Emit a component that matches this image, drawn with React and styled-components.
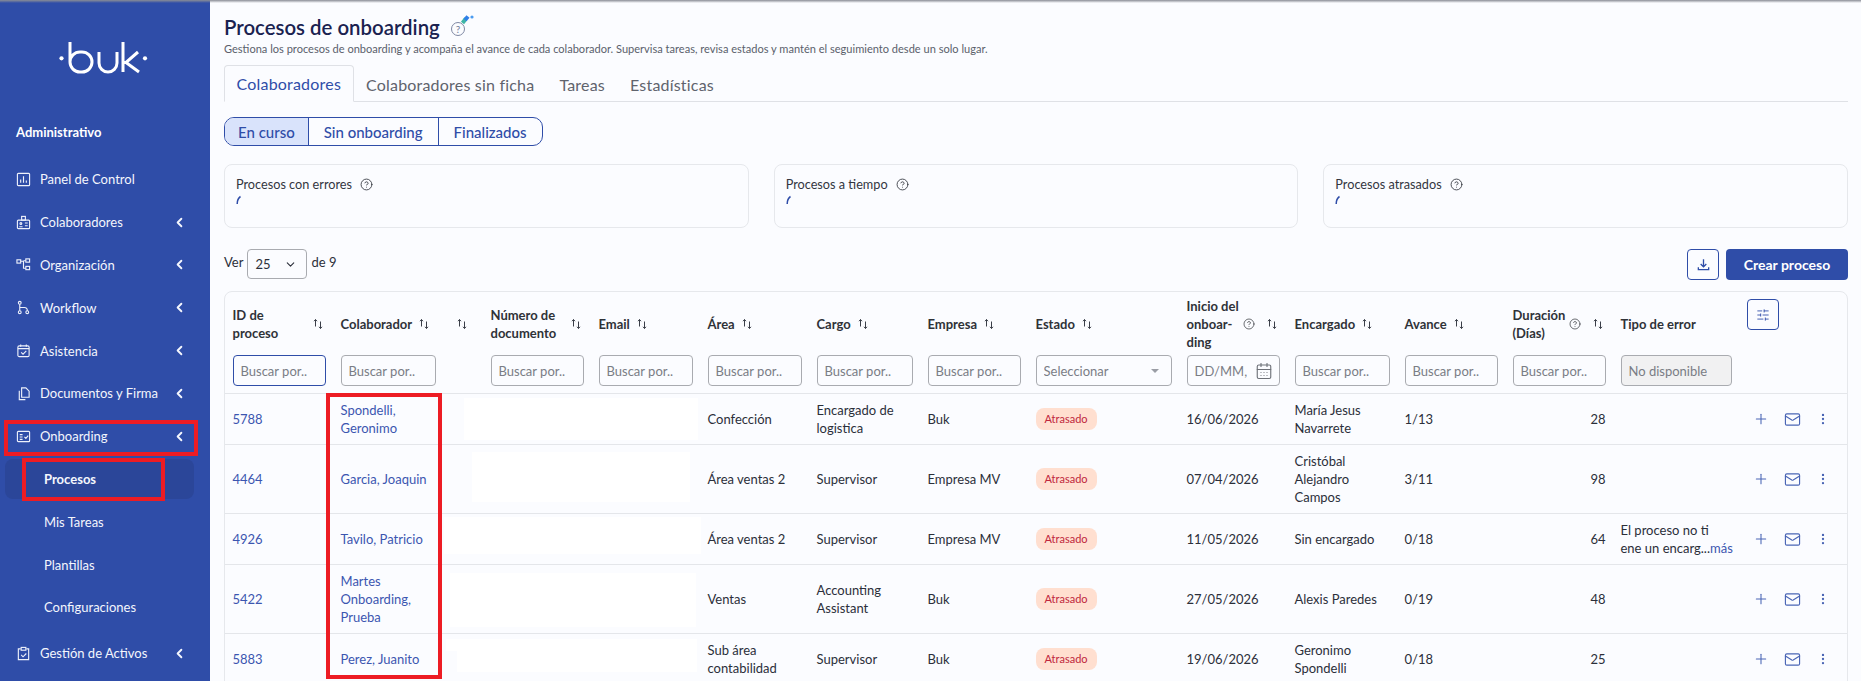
import React from "react";
import styled, {createGlobalStyle} from "styled-components";
import {CalendarDays, ChevronDown, ChevronLeft, CircleHelp, EllipsisVertical, Mail, Plus, SlidersHorizontal} from "lucide-react";

const primary = "#2f4da8";

const navIcons = {
    panel: <><rect x="1.5" y="1.5" width="13" height="13" rx="1"/><path d="M5 11.5V8M8 11.5V4.5M11 11.5V9"/></>,
    people: <><rect x="1.5" y="5.5" width="13" height="9" rx="1"/><rect x="6" y="1.5" width="4" height="4"/><circle cx="5.2" cy="9" r="1"/><path d="M3.5 12.5h3.5M9.5 8.5h3M9.5 11.5h3"/></>,
    org: <><rect x="1" y="3" width="4" height="3.5"/><rect x="10.5" y="2" width="4" height="3.5"/><rect x="10.5" y="10" width="4" height="3.5"/><path d="M5 4.5h3V12h2.5M8 4h2.5"/></>,
    flow: <><circle cx="4" cy="3" r="1.5"/><circle cx="4" cy="13" r="1.5"/><circle cx="12" cy="13" r="1.5"/><path d="M4 4.5v7M4 8h5a3 3 0 0 1 3 3.5"/></>,
    calendar: <><rect x="2" y="3" width="12" height="11.5" rx="1.5"/><path d="M2 6h12M5 1.5V4M11 1.5V4M5.5 10l2 2 3.5-3.5"/></>,
    docs: <><path d="M6 2h4.5L14 5.5V12H6z"/><path d="M3.5 5v9.5H10"/></>,
    onboarding: <><rect x="1.5" y="2.5" width="13" height="11" rx="1"/><path d="M4 6h3M4 8.5h3M4 11h3M9 8.5l1.5 1.5 2.5-3"/></>,
    assets: <><path d="M5 3H2.5v11.5h11V3H11"/><rect x="5.5" y="1.5" width="5" height="3"/><path d="M5.5 9.5l2 2 3.5-3.5"/></>
};

const navItems = [
    {icon: "panel", label: "Panel de Control"},
    {icon: "people", label: "Colaboradores", chevron: true},
    {icon: "org", label: "Organización", chevron: true},
    {icon: "flow", label: "Workflow", chevron: true},
    {icon: "calendar", label: "Asistencia", chevron: true},
    {icon: "docs", label: "Documentos y Firma", chevron: true},
    {icon: "onboarding", label: "Onboarding", chevron: true}
];

const subItems = ["Procesos", "Mis Tareas", "Plantillas", "Configuraciones"];

const columns = [
    {title: <>ID de<br/>proceso</>, width: 108, spread: true},
    {title: "Colaborador", width: 150, extraSort: true},
    {title: <>Número de<br/>documento</>, width: 108, spread: true},
    {title: "Email", width: 109},
    {title: "Área", width: 109},
    {title: "Cargo", width: 111},
    {title: "Empresa", width: 108},
    {title: "Estado", width: 151, filter: "select"},
    {title: <>Inicio del<br/>onboar-<br/>ding</>, width: 108, help: true, spread: true, filter: "date"},
    {title: "Encargado", width: 110},
    {title: "Avance", width: 108},
    {title: <>Duración<br/>(Días)</>, width: 108, help: true, spread: true},
    {title: "Tipo de error", width: 126, noSort: true, filter: "disabled"}
];

const rows = [
    {id: "5788", name: "Spondelli, Geronimo", area: "Confección", cargo: "Encargado de logistica", empresa: "Buk", inicio: "16/06/2026", encargado: "María Jesus Navarrete", avance: "1/13", dias: 28},
    {id: "4464", name: "Garcia, Joaquin", area: "Área ventas 2", cargo: "Supervisor", empresa: "Empresa MV", inicio: "07/04/2026", encargado: "Cristóbal Alejandro Campos", avance: "3/11", dias: 98},
    {id: "4926", name: "Tavilo, Patricio", area: "Área ventas 2", cargo: "Supervisor", empresa: "Empresa MV", inicio: "11/05/2026", encargado: "Sin encargado", avance: "0/18", dias: 64, error: true},
    {id: "5422", name: "Martes Onboarding, Prueba", area: "Ventas", cargo: "Accounting Assistant", empresa: "Buk", inicio: "27/05/2026", encargado: "Alexis Paredes", avance: "0/19", dias: 48},
    {id: "5883", name: "Perez, Juanito", area: "Sub área contabilidad", cargo: "Supervisor", empresa: "Buk", inicio: "19/06/2026", encargado: "Geronimo Spondelli", avance: "0/18", dias: 25}
];

const whiteouts = [
    {x: 464, y: 398, w: 234, h: 42},
    {x: 472, y: 452, w: 218, h: 50},
    {x: 444, y: 517, w: 257, h: 37},
    {x: 450, y: 573, w: 246, h: 54},
    {x: 446, y: 639, w: 251, h: 12},
    {x: 457, y: 651, w: 240, h: 21}
];

const redBoxes = [
    {x: 4, y: 420, w: 194, h: 36},
    {x: 22, y: 458, w: 143, h: 43},
    {x: 326, y: 393, w: 116, h: 286}
];

const NavIcon = ({name}) => <NavSvg viewBox="0 0 16 16">{navIcons[name]}</NavSvg>;

const SortIcon = () => <SortSvg viewBox="0 0 12 12">
    <path d="M3.5 8.5V1.5M2 3.2 3.5 1.5 5 3.2M8.5 3.5v7M7 8.8 8.5 10.5 10 8.8"/>
</SortSvg>;

const Spinner = () => <SpinnerSvg viewBox="0 0 6 10"><path d="M1.2 9C1.2 6 2.2 3 4.5 1.5"/></SpinnerSvg>;

const Logo = () => <LogoSvg viewBox="0 0 105 45">
    <circle cx="11.5" cy="23.3" r="2.1" fill="#fff" stroke="none"/>
    <path d="M20 7V27a10 10 0 0 0 10 10h2a10 10 0 0 0 0-20h-2a10 10 0 0 0-10 10"/>
    <path d="M49 17V28a9 9 0 0 0 18 0V17"/>
    <path d="M73 7V37M73 27.5h3L88 17M76 27.5 89 37"/>
    <circle cx="95" cy="23.3" r="2.1" fill="#fff" stroke="none"/>
</LogoSvg>;

const TitleIcon = () => <TitleSvg viewBox="0 0 30 26">
    <circle cx="11" cy="15" r="6.5" fill="none" stroke="#7f88a3" strokeWidth="1"/>
    <text x="11" y="18.5" textAnchor="middle" fontSize="10" fill="#7f88a3" fontFamily="Lato, sans-serif">?</text>
    <path d="M15.5 9 19 4.5" stroke="#3fb5a5" strokeWidth="4"/>
    <path d="M18 6 21 2.5" stroke="#2f7fe8" strokeWidth="4"/>
    <circle cx="25" cy="3" r="1.6" fill="#4a9bf0"/>
</TitleSvg>;

const Sidebar = () => <Side>
    <Brand><Logo/></Brand>
    <SectionTitle>Administrativo</SectionTitle>
    <NavList>
        {navItems.map(item => <NavItem key={item.label}>
            <NavIcon name={item.icon}/>
            <span>{item.label}</span>
            {item.chevron && <NavChevron size={15} strokeWidth={3}/>}
        </NavItem>)}
        {subItems.map((item, index) => <SubItem key={item} $active={index === 0}>{item}</SubItem>)}
        <NavItem $spaced>
            <NavIcon name="assets"/>
            <span>Gestión de Activos</span>
            <NavChevron size={15} strokeWidth={3}/>
        </NavItem>
    </NavList>
</Side>;

const StatCard = ({title}) => <Stat>
    <StatTitle>{title}<CircleHelp size={13} strokeWidth={1.6}/></StatTitle>
    <Spinner/>
</Stat>;

const Filter = ({type}) => {
    if (type === "select") {
        return <FilterBox>
            <FilterText>Seleccionar</FilterText>
            <Caret/>
        </FilterBox>;
    }
    if (type === "date") {
        return <FilterBox>
            <FilterText>DD/MM,</FilterText>
            <CalendarDays size={18} strokeWidth={1.5} color="#6d7078"/>
        </FilterBox>;
    }
    if (type === "disabled") {
        return <FilterBox $disabled><FilterText>No disponible</FilterText></FilterBox>;
    }
    return <FilterInput placeholder="Buscar por.." readOnly/>;
};

const ProcessTable = () => <TableCard>
    <Table>
        <colgroup>
            {columns.map((column, index) => <col key={index} width={column.width}/>)}
            <col/>
        </colgroup>
        <thead>
            <tr>
                {columns.map((column, index) => <HeadCell key={index}>
                    <HeadInner>
                        <span>{column.title}</span>
                        {column.help && <HelpWrap><CircleHelp size={12} strokeWidth={1.4}/></HelpWrap>}
                        {!column.noSort && <SortWrap $spread={column.spread}><SortIcon/></SortWrap>}
                        {column.extraSort && <SortWrap $spread $inset><SortIcon/></SortWrap>}
                    </HeadInner>
                </HeadCell>)}
                <HeadCell $top><IconButton><SlidersHorizontal size={14} strokeWidth={1.5}/></IconButton></HeadCell>
            </tr>
            <FilterRow>
                {columns.map((column, index) => <FilterCell key={index} $slim={column.title === "Colaborador"}>
                    {index === 0 ? <FilterInput $focused placeholder="Buscar por.." readOnly/> : <Filter type={column.filter}/>}
                </FilterCell>)}
                <FilterCell/>
            </FilterRow>
        </thead>
        <tbody>
            {rows.map(row => <tr key={row.id}>
                <Cell><Link>{row.id}</Link></Cell>
                <Cell><NameLink>{row.name}</NameLink></Cell>
                <Cell/>
                <Cell/>
                <Cell>{row.area}</Cell>
                <Cell>{row.cargo}</Cell>
                <Cell>{row.empresa}</Cell>
                <Cell><Badge>Atrasado</Badge></Cell>
                <Cell>{row.inicio}</Cell>
                <Cell><Owner>{row.encargado}</Owner></Cell>
                <Cell>{row.avance}</Cell>
                <Cell $right>{row.dias}</Cell>
                <Cell>{row.error && <ErrorText>El proceso no ti<br/>ene un encarg...<Link>más</Link></ErrorText>}</Cell>
                <Cell>
                    <Actions>
                        <Plus size={16} strokeWidth={1.6}/>
                        <Mail size={17} strokeWidth={1.6}/>
                        <EllipsisVertical size={14} strokeWidth={2}/>
                    </Actions>
                </Cell>
            </tr>)}
        </tbody>
    </Table>
</TableCard>;

const App = () => <>
    <GlobalStyle/>
    <Page>
        <TopShade/>
        <Sidebar/>
        <Main>
            <Title>Procesos de onboarding<TitleIcon/></Title>
            <Subtitle>Gestiona los procesos de onboarding y acompaña el avance de cada colaborador. Supervisa tareas, revisa estados y mantén el seguimiento desde un solo lugar.</Subtitle>
            <Tabs>
                <Tab $active>Colaboradores</Tab>
                <Tab>Colaboradores sin ficha</Tab>
                <Tab>Tareas</Tab>
                <Tab>Estadísticas</Tab>
            </Tabs>
            <Segments>
                <Segment $active>En curso</Segment>
                <Segment>Sin onboarding</Segment>
                <Segment>Finalizados</Segment>
            </Segments>
            <Stats>
                <StatCard title="Procesos con errores"/>
                <StatCard title="Procesos a tiempo"/>
                <StatCard title="Procesos atrasados"/>
            </Stats>
            <Toolbar>
                <PageSize>
                    <span>Ver</span>
                    <SizeSelect>25<ChevronDown size={13} strokeWidth={2}/></SizeSelect>
                    <span>de 9</span>
                </PageSize>
                <ToolbarActions>
                    <IconButton>
                        <svg width="15" height="15" viewBox="0 0 16 16" fill="none" stroke="currentColor" strokeWidth="1.4">
                            <path d="M8 2.5v8M5 7.5l3 3 3-3M2.5 11v2.5h11V11"/>
                        </svg>
                    </IconButton>
                    <PrimaryButton>Crear proceso</PrimaryButton>
                </ToolbarActions>
            </Toolbar>
            <ProcessTable/>
        </Main>
        {whiteouts.map((box, index) => <Whiteout key={index} $x={box.x} $y={box.y} $w={box.w} $h={box.h}/>)}
        {redBoxes.map((box, index) => <RedBox key={index} $x={box.x} $y={box.y} $w={box.w} $h={box.h}/>)}
    </Page>
</>;

const GlobalStyle = createGlobalStyle`
  html, body {
    margin: 0;
    height: 100%;
    overflow: hidden;
    background: #fbfcff;
  }

  body, input {
    font-family: "Lato", "Noto Sans", sans-serif;
  }

  * {
    box-sizing: border-box;
  }
`;

const Page = styled.div`
  position: relative;
  display: flex;
  height: 681px;
  overflow: hidden;
  color: #2b2f3a;
`;

const TopShade = styled.div`
  position: absolute;
  top: 0;
  left: 0;
  right: 0;
  height: 3px;
  background: linear-gradient(#8a8d96, rgba(138, 141, 150, 0));
  z-index: 3;
`;

const Side = styled.aside`
  flex: 0 0 210px;
  background: ${primary};
  color: #f4f6fd;
`;

const Brand = styled.div`
  padding: 35px 0 0 50px;
  height: 80px;
`;

const LogoSvg = styled.svg`
  display: block;
  width: 105px;
  height: 45px;
  fill: none;
  stroke: #fff;
  stroke-width: 3;
`;

const SectionTitle = styled.div`
  margin-top: 43px;
  padding-left: 16px;
  font-size: 13px;
  line-height: 18px;
  font-weight: 700;
  color: #fff;
`;

const NavList = styled.nav`
  display: flex;
  flex-direction: column;
  margin-top: 17px;
`;

const NavItem = styled.div`
  display: flex;
  align-items: center;
  gap: 9px;
  height: 42.8px;
  margin-top: ${({$spaced}) => $spaced ? "3px" : "0"};
  padding: 0 23px 0 16px;
  font-size: 13px;
`;

const NavSvg = styled.svg`
  flex: 0 0 15px;
  width: 15px;
  height: 15px;
  fill: none;
  stroke: #eef1fb;
  stroke-width: 1.2;
`;

const NavChevron = styled(ChevronLeft)`
  margin-left: auto;
`;

const SubItem = styled.div`
  display: flex;
  align-items: center;
  height: 40px;
  margin: 1.4px 16px 1.4px 5px;
  padding-left: 39px;
  border-radius: 8px;
  font-size: 13px;
  font-weight: ${({$active}) => $active ? 700 : 400};
  background: ${({$active}) => $active ? "#2b4699" : "transparent"};
`;

const Main = styled.main`
  flex: 1;
  min-width: 0;
  padding: 16px 13px 0 14px;
`;

const Title = styled.h1`
  display: flex;
  align-items: center;
  gap: 7px;
  margin: 0;
  height: 22px;
  font-size: 20.4px;
  font-weight: 600;
  color: #1a2250;
`;

const TitleSvg = styled.svg`
  width: 30px;
  height: 26px;
`;

const Subtitle = styled.p`
  margin: 4px 0 0;
  font-size: 11.05px;
  line-height: 14px;
  color: #5a5f6b;
`;

const Tabs = styled.div`
  display: flex;
  height: 37px;
  margin-top: 9px;
  border-bottom: 1px solid #dfe1e6;
`;

const Tab = styled.div`
  display: flex;
  align-items: center;
  height: 37px;
  padding: 0 11.5px;
  font-size: 16px;
  letter-spacing: 0.2px;
  color: ${({$active}) => $active ? primary : "#5f636d"};
  background: ${({$active}) => $active ? "#fbfcff" : "transparent"};
  border: 1px solid ${({$active}) => $active ? "#dfe1e6" : "transparent"};
  border-bottom: ${({$active}) => $active ? "1px solid #fbfcff" : "0"};
  border-radius: 4px 4px 0 0;
`;

const Segments = styled.div`
  display: inline-flex;
  height: 29px;
  margin-top: 15px;
  border: 1px solid ${primary};
  border-radius: 10px;
  overflow: hidden;
`;

const Segment = styled.div`
  display: flex;
  align-items: center;
  justify-content: center;
  padding: 0 ${({$active}) => $active ? "13px" : "15px"};
  font-size: 15px;
  font-weight: 500;
  color: ${primary};
  background: ${({$active}) => $active ? "#d9e3fb" : "transparent"};

  & + & {
    border-left: 1px solid ${primary};
  }
`;

const Stats = styled.div`
  display: grid;
  grid-template-columns: repeat(3, 1fr);
  gap: 25px;
  margin-top: 18px;
`;

const Stat = styled.div`
  height: 64px;
  padding: 11px;
  border: 1px solid #e6e8ec;
  border-radius: 8px;
`;

const StatTitle = styled.div`
  display: flex;
  align-items: center;
  gap: 8px;
  font-size: 12.7px;
  line-height: 16px;
  color: #33363f;
`;

const SpinnerSvg = styled.svg`
  display: block;
  width: 6px;
  height: 10px;
  margin-top: 3px;
  fill: none;
  stroke: ${primary};
  stroke-width: 1.5;
`;

const Toolbar = styled.div`
  display: flex;
  justify-content: space-between;
  height: 31px;
  margin-top: 21px;
`;

const PageSize = styled.div`
  display: flex;
  align-items: flex-start;
  gap: 4px;
  font-size: 13px;
  line-height: 26px;
`;

const SizeSelect = styled.div`
  display: flex;
  align-items: center;
  justify-content: space-between;
  width: 60px;
  height: 30px;
  padding: 0 9px 0 7px;
  border: 1px solid #a9abb0;
  border-radius: 4px;
`;

const ToolbarActions = styled.div`
  display: flex;
  gap: 7px;
`;

const IconButton = styled.button`
  display: flex;
  align-items: center;
  justify-content: center;
  width: 32px;
  height: 31px;
  padding: 0;
  border: 1px solid ${primary};
  border-radius: 4px;
  background: transparent;
  color: ${primary};
`;

const PrimaryButton = styled.button`
  width: 122px;
  height: 31px;
  border: 0;
  border-radius: 4px;
  background: ${primary};
  color: #fff;
  font-family: inherit;
  font-size: 14px;
  font-weight: 700;
`;

const TableCard = styled.div`
  margin-top: 11px;
  height: 400px;
  border: 1px solid #e6e8ec;
  border-radius: 8px 8px 0 0;
  overflow: hidden;
`;

const Table = styled.table`
  width: 100%;
  table-layout: fixed;
  border-collapse: collapse;
  font-size: 13px;
  line-height: 18px;
`;

const HeadCell = styled.th`
  height: 63px;
  padding: ${({$top}) => $top ? "7px 7.5px 0" : "0 7.5px"};
  text-align: left;
  vertical-align: ${({$top}) => $top ? "top" : "middle"};
  font-weight: 700;
  color: #2f3238;
`;

const HeadInner = styled.div`
  position: relative;
  display: flex;
  align-items: center;
  gap: 6px;
`;

const SortWrap = styled.span`
  display: flex;
  margin-left: ${({$spread}) => $spread ? "auto" : "0"};
  margin-right: ${({$spread, $inset}) => $inset ? "8px" : $spread ? "2px" : "0"};
`;

const HelpWrap = styled.span`
  display: flex;
  margin-left: -2px;
`;

const SortSvg = styled.svg`
  width: 12px;
  height: 12px;
  fill: none;
  stroke: #3a3e48;
  stroke-width: 1;
`;

const FilterRow = styled.tr`
  border-bottom: 1px solid #e4e6ea;
`;

const FilterCell = styled.td`
  height: 38px;
  padding: 0 ${({$slim}) => $slim ? "47px" : "7.5px"} 7px 7.5px;
`;

const FilterInput = styled.input`
  display: block;
  width: 100%;
  height: 31px;
  padding: 0 7px;
  border: 1px solid ${({$focused}) => $focused ? primary : "#a9abb0"};
  border-radius: 4px;
  background: transparent;
  font-size: 13px;
  outline: none;

  &::placeholder {
    color: #7a7d85;
  }
`;

const FilterBox = styled.div`
  display: flex;
  align-items: center;
  justify-content: space-between;
  height: 31px;
  padding: 0 6px 0 7px;
  border: 1px solid #a9abb0;
  border-radius: 4px;
  background: ${({$disabled}) => $disabled ? "#f1f1f2" : "transparent"};
  color: #7a7d85;
`;

const FilterText = styled.span`
  white-space: nowrap;
  overflow: hidden;
`;

const Caret = styled.span`
  width: 0;
  height: 0;
  margin-right: 6px;
  border-left: 4px solid transparent;
  border-right: 4px solid transparent;
  border-top: 4px solid #9a9da5;
`;

const Cell = styled.td`
  padding: 7px 7.5px;
  border-bottom: 1px solid #e4e6ea;
  text-align: ${({$right}) => $right ? "right" : "left"};
  vertical-align: middle;
  color: #2b2f3a;
`;

const Link = styled.span`
  color: #3c56b0;
`;

const NameLink = styled(Link)`
  display: block;
  max-width: 95px;
`;

const Owner = styled.div`
  max-width: 95px;
`;

const ErrorText = styled.div`
  white-space: nowrap;
`;

const Badge = styled.span`
  display: inline-block;
  height: 22px;
  padding: 0 9px;
  border-radius: 8px;
  background: #ffdfd0;
  color: #c0263d;
  font-size: 11px;
  line-height: 22px;
  vertical-align: middle;
`;

const Actions = styled.div`
  display: flex;
  align-items: center;
  gap: 15px;
  padding-left: 6px;
  color: #4a65b5;
`;

const Whiteout = styled.div`
  position: absolute;
  left: ${({$x}) => $x}px;
  top: ${({$y}) => $y}px;
  width: ${({$w}) => $w}px;
  height: ${({$h}) => $h}px;
  background: #fff;
`;

const RedBox = styled.div`
  position: absolute;
  left: ${({$x}) => $x}px;
  top: ${({$y}) => $y}px;
  width: ${({$w}) => $w}px;
  height: ${({$h}) => $h}px;
  border: 4px solid #ed1c24;
`;

export default App;
